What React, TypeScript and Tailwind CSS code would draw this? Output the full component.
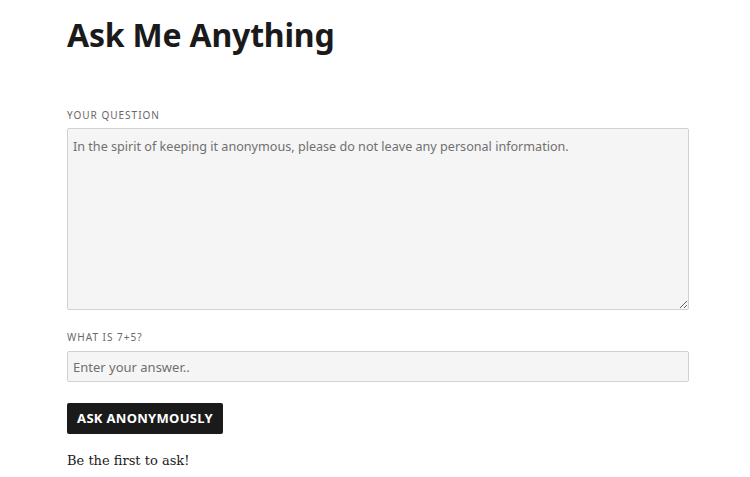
import React from "react";

export default function App() {
  return (
    <div className="w-[750px] h-[477px] bg-white overflow-hidden font-['Noto_Sans',sans-serif]">
      <div className="ml-[67px] w-[622px] pt-[15px] flex flex-col">
        <h1 className="text-[32px] leading-[40px] font-bold text-[#1a1a1a] tracking-[-0.2px]">
          Ask Me Anything
        </h1>
        <label className="mt-[53px] text-[10px] leading-[14px] tracking-[1px] uppercase text-[#686868]">
          Your Question
        </label>
        <textarea
          className="mt-[6px] block w-[622px] h-[182px] bg-[#f5f5f5] border border-[#d1d1d1] rounded-[2px] px-[5px] py-[8px] text-[12.6px] leading-[19px] text-[#1a1a1a] placeholder:text-[#707070] outline-none"
          placeholder="In the spirit of keeping it anonymous, please do not leave any personal information."
        />
        <label className="mt-[20px] text-[10px] leading-[14px] tracking-[1px] uppercase text-[#686868]">
          What is 7+5?
        </label>
        <input
          className="mt-[7px] block w-[622px] h-[31px] bg-[#f5f5f5] border border-[#d1d1d1] rounded-[2px] px-[5px] text-[13px] text-[#1a1a1a] placeholder:text-[#707070] outline-none"
          placeholder="Enter your answer.."
        />
        <div className="mt-[21px] flex">
          <button className="w-[156px] h-[31px] bg-[#1a1a1a] text-white text-[13px] font-bold uppercase tracking-[0.3px] rounded-[2px]">
            Ask Anonymously
          </button>
        </div>
        <p className="mt-[17px] text-[13px] leading-[20px] text-[#1a1a1a] font-['DejaVu_Serif',serif]">
          Be the first to ask!
        </p>
      </div>
    </div>
  );
}
